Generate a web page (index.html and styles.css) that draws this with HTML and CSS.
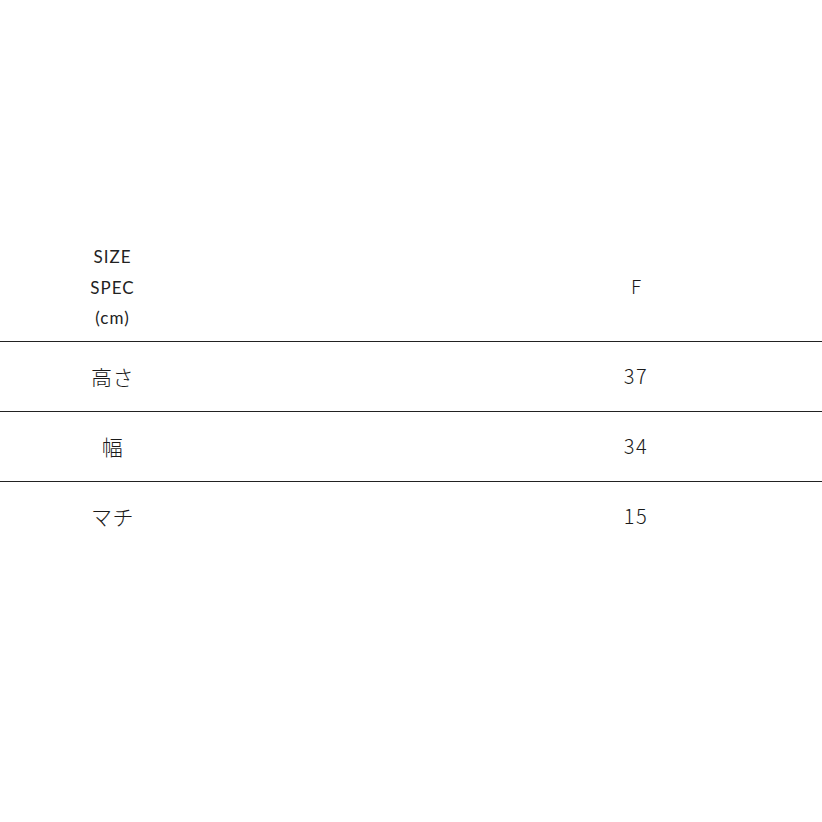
FILE: index.html
```html
<!DOCTYPE html>
<html lang="ja">
<head>
<meta charset="utf-8">
<link rel="stylesheet" href="styles.css">
</head>
<body>
<div class="spec">
  <div class="row head">
    <div class="label"><span>SIZE</span><span>SPEC</span><span>(cm)</span></div>
    <div class="gap"></div>
    <div class="val">F</div>
  </div>
  <div class="row">
    <div class="label">高さ</div>
    <div class="gap"></div>
    <div class="val">37</div>
  </div>
  <div class="row">
    <div class="label">幅</div>
    <div class="gap"></div>
    <div class="val">34</div>
  </div>
  <div class="row">
    <div class="label">マチ</div>
    <div class="gap"></div>
    <div class="val">15</div>
  </div>
</div>
</body>
</html>
```
FILE: styles.css
```css
html, body {
  margin: 0;
  padding: 0;
  background: #fff;
}
body {
  font-family: "Lato", "Noto Sans CJK JP", sans-serif;
  color: #1a1a1a;
}
.spec {
  margin-top: 232px;
  width: 822px;
}
.row {
  display: grid;
  grid-template-columns: 225px 1fr 372px;
  align-items: center;
  height: 70px;
  padding-bottom: 2px;
  border-top: 1px solid #222;
  box-sizing: border-box;
  font-size: 20px;
}
.head {
  border-top: none;
  height: 109px;
  padding-bottom: 9px;
  padding-top: 10px;
  font-size: 16px;
}
.label, .val {
  text-align: center;
}
.row .label {
  font-family: "Noto Sans CJK JP", sans-serif;
  font-weight: 300;
  font-size: 21px;
  letter-spacing: 0.5px;
}
.head .label {
  display: flex;
  flex-direction: column;
  line-height: 30.5px;
  font-family: "Lato", sans-serif;
  font-weight: 400;
  font-size: 17px;
  letter-spacing: 1px;
  color: #222;
}
.val {
  font-family: "Noto Sans CJK JP", sans-serif;
  font-weight: 300;
  letter-spacing: 1.5px;
  font-size: 20px;
}
.head .val {
  font-size: 19px;
  letter-spacing: 0;
  padding-bottom: 4px;
}
```
